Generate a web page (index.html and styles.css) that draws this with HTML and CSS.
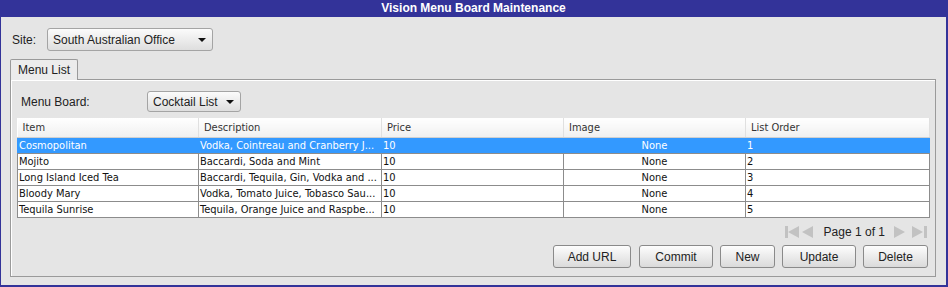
FILE: index.html
```html
<!DOCTYPE html>
<html lang="en">
<head>
  <meta charset="UTF-8">
  <title>Vision Menu Board Maintenance</title>
  <link rel="stylesheet" href="styles.css">
</head>
<body>
  <div class="window">
    <div class="title">Vision Menu Board Maintenance</div>
    <div class="content">
      <div class="site-row">
        <span class="label">Site:</span>
        <div class="combo site-combo"><span>South Australian Office</span><i class="arrow"></i></div>
      </div>

      <div class="tabs">
        <div class="tab">Menu List</div>
      </div>
      <div class="panel">
        <div class="board-row">
          <span class="label board-label">Menu Board:</span>
          <div class="combo board-combo"><span>Cocktail List</span><i class="arrow"></i></div>
        </div>

        <table class="grid">
          <colgroup>
            <col style="width:181px"><col style="width:183px"><col style="width:182px"><col style="width:182px"><col>
          </colgroup>
          <thead>
            <tr><th>Item</th><th>Description</th><th>Price</th><th>Image</th><th>List Order</th></tr>
          </thead>
          <tbody>
            <tr class="selected"><td>Cosmopolitan</td><td>Vodka, Cointreau and Cranberry J...</td><td>10</td><td class="center">None</td><td>1</td></tr>
            <tr><td>Mojito</td><td>Baccardi, Soda and Mint</td><td>10</td><td class="center">None</td><td>2</td></tr>
            <tr><td>Long Island Iced Tea</td><td>Baccardi, Tequila, Gin, Vodka and ...</td><td>10</td><td class="center">None</td><td>3</td></tr>
            <tr><td>Bloody Mary</td><td>Vodka, Tomato Juice, Tobasco Sau...</td><td>10</td><td class="center">None</td><td>4</td></tr>
            <tr><td>Tequila Sunrise</td><td>Tequila, Orange Juice and Raspbe...</td><td>10</td><td class="center">None</td><td>5</td></tr>
          </tbody>
        </table>

        <div class="pager">
          <svg width="14" height="12" viewBox="0 0 14 12"><rect x="0" y="0" width="3" height="12"/><polygon points="14,0 14,12 3,6"/></svg>
          <svg width="12" height="12" viewBox="0 0 12 12" class="prev"><polygon points="12,0 12,12 1,6"/></svg>
          <span class="page-text">Page 1 of 1</span>
          <svg width="12" height="12" viewBox="0 0 12 12" class="next"><polygon points="0,0 0,12 11,6"/></svg>
          <svg width="16" height="12" viewBox="0 0 16 12" class="last"><polygon points="0,0 0,12 11,6"/><rect x="12" y="0" width="3" height="12"/></svg>
        </div>

        <div class="actions">
          <button class="btn w-add">Add URL</button>
          <button class="btn w-commit">Commit</button>
          <button class="btn w-new">New</button>
          <button class="btn w-update">Update</button>
          <button class="btn w-delete">Delete</button>
        </div>
      </div>
    </div>
  </div>
</body>
</html>
```

FILE: styles.css
```css
body { margin: 0; font-family: "Liberation Sans", Arial, sans-serif; font-size: 12px; color: #222; }
.window { width: 948px; height: 287px; box-sizing: border-box; background: #e5e5e5; border-left: 1px solid #333399; border-right: 2px solid #333399; border-bottom: 2px solid #333399; }
.title { height: 17px; line-height: 17px; background: #333399; color: #fff; font-weight: bold; text-align: center; }
.content { padding: 11px 10px 0 9px; }
.label { color: #222; }
.site-row { display: flex; align-items: center; padding-left: 2px; height: 23px; }
.combo { display: flex; align-items: center; justify-content: space-between; box-sizing: border-box; height: 23px; padding: 0 6px 0 5px; border: 1px solid #a4a4a4; border-radius: 3px; background: linear-gradient(#fbfbfb, #dedede); }
.site-combo { width: 166px; margin-left: 11px; }
.arrow { width: 0; height: 0; border-left: 4px solid transparent; border-right: 4px solid transparent; border-top: 4px solid #111; }
.tabs { display: flex; margin-top: 7px; }
.tab { height: 21px; line-height: 21px; padding: 0 7px; box-sizing: border-box; white-space: nowrap; border: 1px solid #9a9a9a; border-bottom: 0; background: #ececec; border-radius: 2px 2px 0 0; position: relative; top: 1px; }
.panel { border: 1px solid #9a9a9a; box-shadow: inset 1px 1px 0 #fff; padding: 11px 6px 8px 6px; }
.board-row { display: flex; align-items: center; height: 21px; }
.board-label { width: 126px; padding-left: 4px; }
.board-combo { width: 94px; height: 21px; }
.grid { width: 913px; margin-top: 6px; border-collapse: collapse; table-layout: fixed; font-family: "DejaVu Sans Condensed", "DejaVu Sans", sans-serif; font-size: 11px; background: #fff; }
.grid th { height: 19px; padding: 0 5px; text-align: left; font-weight: normal; color: #333; background: linear-gradient(#ffffff, #f0f0f0); border-right: 1px solid #e0e0e0; border-bottom: 1px solid #d0d0d0; }
.grid td { height: 15px; padding: 0 1px; white-space: nowrap; overflow: hidden; border: 1px solid #8c8c8c; color: #111; }
.grid td.center { text-align: center; }
.grid tr.selected td { background: #3399ff; color: #fff; border-left-color: #3399ff; border-right-color: #3399ff; }
.pager { display: flex; align-items: center; justify-content: flex-end; height: 12px; margin-top: 8px; padding-right: 1px; fill: #c2c2c2; }
.pager svg { display: block; }
.prev { margin-left: 2px; }
.page-text { margin: 0 9px 0 11px; color: #222; }
.last { margin-left: 6px; }
.actions { display: flex; justify-content: flex-end; gap: 7px; margin-top: 7px; padding-right: 1px; }
.btn { height: 23px; box-sizing: border-box; padding: 0; font: 12px "Liberation Sans", Arial, sans-serif; color: #222; border: 1px solid #8a8a8a; border-radius: 3px; background: linear-gradient(#fdfdfd, #dadada); }
.w-add { width: 78px; margin-right: 1px; }
.w-commit { width: 74px; }
.w-new { width: 55px; }
.w-update { width: 74px; }
.w-delete { width: 65px; }
```
